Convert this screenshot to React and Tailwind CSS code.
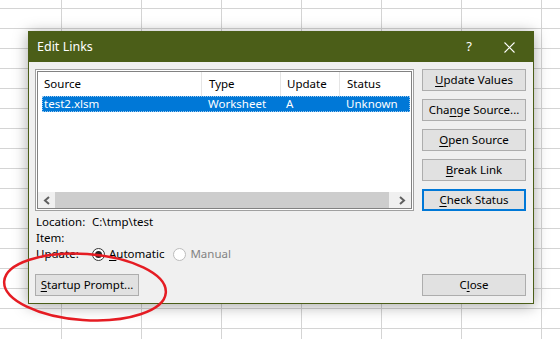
import React from 'react';

function Key({ children }) {
  return <span className="underline decoration-1 underline-offset-[2px]">{children}</span>;
}

function Btn({ children, focused, className = '' }) {
  return (
    <button
      className={
        (focused
          ? 'border-2 border-[#0078d7] '
          : 'border border-[#adadad] ') +
        'h-[22px] w-[104px] bg-[#e1e1e1] text-black leading-none flex items-center justify-center ' +
        className
      }
    >
      {children}
    </button>
  );
}

function Chevron({ dir }) {
  return (
    <svg width="8" height="9" viewBox="0 0 8 9">
      <polyline
        points={dir === 'left' ? '6,1 2,4.5 6,8' : '2,1 6,4.5 2,8'}
        fill="none"
        stroke="#606060"
        strokeWidth="2"
      />
    </svg>
  );
}

function Radio({ checked, disabled }) {
  if (checked) {
    return (
      <span className="w-[13px] h-[13px] shrink-0 rounded-full border border-[#333333] bg-white flex items-center justify-center">
        <span className="block w-[7px] h-[7px] rounded-full bg-[#222222]" />
      </span>
    );
  }
  return (
    <span
      className={
        'block w-[13px] h-[13px] shrink-0 rounded-full border bg-white ' +
        (disabled ? 'border-[#bcbcbc]' : 'border-[#333333]')
      }
    />
  );
}

export default function App() {
  return (
    <div className="relative w-[560px] h-[339px] overflow-hidden bg-white bg-[linear-gradient(to_right,#d4d4d4_1px,transparent_1px),linear-gradient(to_bottom,#d4d4d4_1px,transparent_1px)] bg-[size:80px_20px] bg-[position:61px_8px] pt-[31px] pl-[28px] font-['Noto_Sans',sans-serif] text-[11.5px] text-black">
      <div className="w-[506px] h-[273px] border border-[#4b5e18] bg-[#f0f0f0] shadow-[0_2px_14px_rgba(0,0,0,0.35)] flex flex-col">
        {/* title bar */}
        <div className="h-[30px] bg-[#4b5e18] text-white flex items-center pl-[8px]">
          <span className="text-[12.5px]">Edit Links</span>
          <span className="ml-auto text-[13px] w-[20px] text-center mr-[25px]">?</span>
          <svg width="11" height="11" viewBox="0 0 11 11" className="mr-[18px]">
            <path d="M0.5 0.5 L10.5 10.5 M10.5 0.5 L0.5 10.5" stroke="white" strokeWidth="1.1" />
          </svg>
        </div>

        {/* body */}
        <div className="flex-1 pl-[6px] pr-[7px] pt-[7px] flex flex-col">
          <div className="flex gap-[8px]">
            <div className="w-[379px]">
              {/* list box */}
              <div className="h-[142px] border border-[#a0a0a0] bg-white p-[1px]">
                <div className="h-full border border-[#828282] bg-white flex flex-col">
                  <div className="h-[24px] flex items-center shrink-0">
                    <div className="w-[163px] h-full flex items-center pl-[6px]">Source</div>
                    <div className="w-[79px] h-full flex items-center pl-[7px] border-l border-[#e5e5e5]">Type</div>
                    <div className="w-[59px] h-full flex items-center pl-[6px] border-l border-[#e5e5e5]">Update</div>
                    <div className="flex-1 h-full flex items-center pl-[7px] border-l border-[#e5e5e5]">Status</div>
                  </div>
                  <div className="h-[16px] ml-[4px] mr-[1px] bg-[#0078d7] text-white flex items-center border border-dotted border-[#9cc8ee] shrink-0">
                    <div className="w-[158px] pl-[1px]">test2.xlsm</div>
                    <div className="w-[79px] pl-[7px]">Worksheet</div>
                    <div className="w-[59px] pl-[6px]">A</div>
                    <div className="flex-1 pl-[7px]">Unknown</div>
                  </div>
                  <div className="flex-1" />
                  <div className="h-[16px] bg-[#f0f0f0] flex items-stretch shrink-0">
                    <div className="w-[17px] flex items-center justify-center">
                      <Chevron dir="left" />
                    </div>
                    <div className="w-[334px] bg-[#cdcdcd]" />
                    <div className="flex-1 flex items-center justify-end pr-[5px]">
                      <Chevron dir="right" />
                    </div>
                  </div>
                </div>
              </div>

              {/* info lines */}
              <div className="mt-[3px] pl-[1px] leading-[16px]">
                <div className="flex">
                  <span className="w-[56px]">Location:</span>
                  <span>C:\tmp\test</span>
                </div>
                <div className="flex">
                  <span className="w-[56px]">Item:</span>
                </div>
                <div className="flex items-center h-[16px]">
                  <span className="w-[56px]">Update:</span>
                  <Radio checked />
                  <span className="ml-[4px]">
                    <Key>A</Key>utomatic
                  </span>
                  <span className="ml-[9px] flex items-center">
                    <Radio disabled />
                  </span>
                  <span className="ml-[4px] text-[#838383]">Manual</span>
                </div>
              </div>
            </div>

            {/* right buttons */}
            <div className="w-[104px] flex flex-col gap-[8px]">
              <Btn>
                <span>
                  <Key>U</Key>pdate Values
                </span>
              </Btn>
              <Btn>
                <span>
                  Cha<Key>n</Key>ge Source...
                </span>
              </Btn>
              <Btn>
                <span>
                  <Key>O</Key>pen Source
                </span>
              </Btn>
              <Btn>
                <span>
                  <Key>B</Key>reak Link
                </span>
              </Btn>
              <Btn focused>
                <span>
                  <Key>C</Key>heck Status
                </span>
              </Btn>
            </div>
          </div>

          {/* bottom row */}
          <div className="mt-[12px] flex justify-between">
            <Btn className="w-[103px]">
              <span>
                <Key>S</Key>tartup Prompt...
              </span>
            </Btn>
            <Btn>
              <span>
                C<Key>l</Key>ose
              </span>
            </Btn>
          </div>
        </div>
      </div>

      {/* red annotation */}
      <svg className="absolute inset-0 pointer-events-none" width="560" height="339" viewBox="0 0 560 339">
        <ellipse
          cx="85"
          cy="287"
          rx="81"
          ry="33"
          transform="rotate(4 85 287)"
          fill="none"
          stroke="#e51c23"
          strokeWidth="2.5"
        />
      </svg>
    </div>
  );
}
